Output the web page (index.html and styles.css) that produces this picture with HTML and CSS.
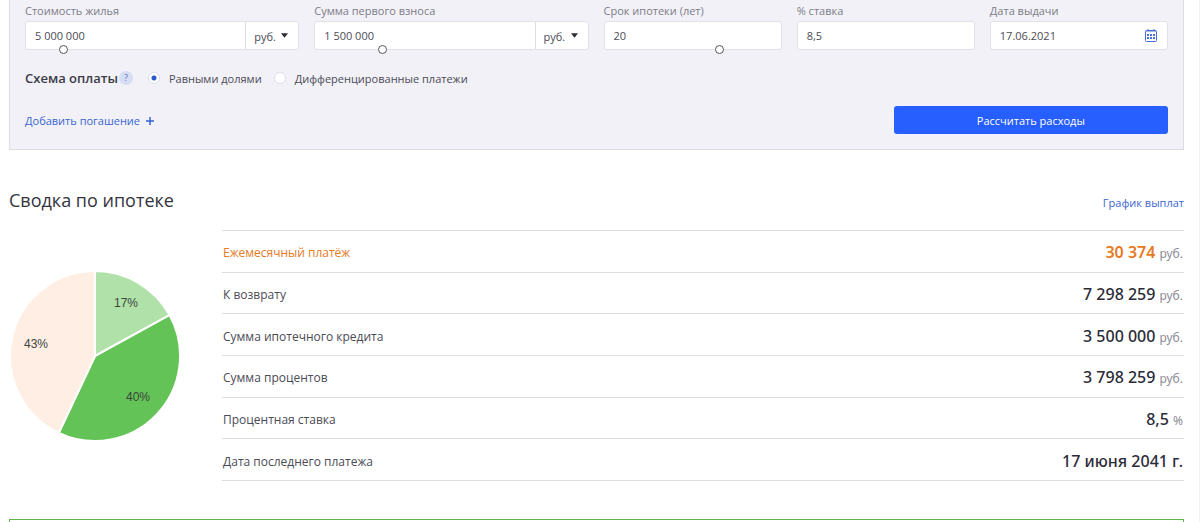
FILE: index.html
```html
<!DOCTYPE html>
<html lang="ru">
<head>
<meta charset="utf-8">
<title>Ипотечный калькулятор</title>
<link rel="stylesheet" href="styles.css">
</head>
<body>
<main class="page">
  <form class="calc">
    <div class="fields">
      <div class="field">
        <label class="field-label" for="price">Стоимость жилья</label>
        <div class="control">
          <input class="input" id="price" type="text" value="5 000 000">
          <div class="currency">
            <select class="currency-select" aria-label="Валюта стоимости"><option>руб.</option></select>
            <svg class="caret" viewBox="0 0 8 5" aria-hidden="true"><path d="M0 0h8L4 5z"/></svg>
          </div>
          <input class="slider" type="range" min="0" max="200" value="25" aria-label="Стоимость жилья">
        </div>
      </div>
      <div class="field">
        <label class="field-label" for="deposit">Сумма первого взноса</label>
        <div class="control">
          <input class="input" id="deposit" type="text" value="1 500 000">
          <div class="currency">
            <select class="currency-select" aria-label="Валюта взноса"><option>руб.</option></select>
            <svg class="caret" viewBox="0 0 8 5" aria-hidden="true"><path d="M0 0h8L4 5z"/></svg>
          </div>
          <input class="slider" type="range" min="0" max="200" value="48" aria-label="Сумма первого взноса">
        </div>
      </div>
      <div class="field">
        <label class="field-label" for="term">Срок ипотеки (лет)</label>
        <div class="control">
          <input class="input" id="term" type="text" value="20">
          <input class="slider" type="range" min="0" max="200" value="132" aria-label="Срок ипотеки">
        </div>
      </div>
      <div class="field">
        <label class="field-label" for="rate">% ставка</label>
        <div class="control"><input class="input" id="rate" type="text" value="8,5"></div>
      </div>
      <div class="field">
        <label class="field-label" for="date">Дата выдачи</label>
        <div class="control">
          <input class="input" id="date" type="text" value="17.06.2021">
          <button class="calendar" type="button" aria-label="Открыть календарь">
            <svg viewBox="0 0 12 13" width="12" height="13" aria-hidden="true">
              <path d="M.5 2.5a1 1 0 0 1 1-1h9a1 1 0 0 1 1 1v9a1 1 0 0 1-1 1h-9a1 1 0 0 1-1-1zM1 2h10M3 0v2M9 0v2" fill="none" stroke="#4a70d8"/>
              <path d="M2 5h2v2H2zM5 5h2v2H5zM8 5h2v2H8zM2 8h2v2H2zM5 8h2v2H5zM8 8h2v2H8z" fill="#4a70d8"/>
            </svg>
          </button>
        </div>
      </div>
    </div>
    <div class="scheme" role="radiogroup" aria-labelledby="scheme-title">
      <span class="scheme-title" id="scheme-title">Схема оплаты</span>
      <button class="help" type="button">?</button>
      <label class="choice"><input class="radio" type="radio" name="scheme" checked><span>Равными долями</span></label>
      <label class="choice"><input class="radio" type="radio" name="scheme"><span>Дифференцированные платежи</span></label>
    </div>
    <div class="actions">
      <a class="link add" href="#">Добавить погашение
        <svg viewBox="0 0 8 8" width="8" height="8" aria-hidden="true"><path d="M4 0v8M0 4h8" stroke="#2f5fd0" stroke-width="1.4"/></svg>
      </a>
      <button class="submit" type="submit">Рассчитать расходы</button>
    </div>
  </form>

  <section class="summary">
    <header class="summary-head">
      <h2 class="summary-title">Сводка по ипотеке</h2>
      <a class="link" href="#">График выплат</a>
    </header>
    <div class="summary-body">
      <svg class="pie" viewBox="0 0 172 172" role="img" aria-label="Структура выплат">
        <g stroke="#fff" stroke-width="2" stroke-linejoin="round">
          <path d="M86 86V1A85 85 0 0 1 160.500 45.050Z" fill="#b0e1a9"/>
          <path d="M86 86L160.500 45.050A85 85 0 0 1 49.800 162.900Z" fill="#63c356"/>
          <path d="M86 86L49.800 162.900A85 85 0 0 1 86 1Z" fill="#feeee4"/>
        </g>
        <g class="pie-text">
          <text x="117" y="37">17%</text>
          <text x="129" y="131">40%</text>
          <text x="27" y="78">43%</text>
        </g>
      </svg>
      <table class="totals">
        <tr class="accent"><th scope="row">Ежемесячный платёж</th><td>30 374 <span class="unit">руб.</span></td></tr>
        <tr><th scope="row">К возврату</th><td>7 298 259 <span class="unit">руб.</span></td></tr>
        <tr><th scope="row">Сумма ипотечного кредита</th><td>3 500 000 <span class="unit">руб.</span></td></tr>
        <tr><th scope="row">Сумма процентов</th><td>3 798 259 <span class="unit">руб.</span></td></tr>
        <tr><th scope="row">Процентная ставка</th><td>8,5 <span class="unit">%</span></td></tr>
        <tr><th scope="row">Дата последнего платежа</th><td>17 июня 2041 г.</td></tr>
      </table>
    </div>
  </section>

  <section class="next"></section>
</main>
</body>
</html>
```

FILE: styles.css
```css
* { box-sizing: border-box; }

body {
  margin: 0;
  background: #fff;
  color: #4b4b55;
  font: 11px/16px "Open Sans", "Noto Sans", sans-serif;
}

input, select, button { font: inherit; color: inherit; }

.page {
  display: flex;
  flex-direction: column;
  min-height: 100vh;
  padding: 0 15px 0 9px;
  border-right: 1px solid #f3f3f5;
}

.calc {
  padding: 3px 15px 15px;
  background: #f2f1f8;
  border: 1px solid #dcdce4;
  border-top: 0;
}

.fields {
  display: grid;
  grid-template-columns: 274fr 274fr 178fr 178fr 178fr;
  gap: 15px;
}

.field { min-width: 0; }

.field-label { display: block; margin-bottom: 2px; color: #7c7c87; }

.control {
  position: relative;
  display: flex;
  height: 29px;
  background: #fff;
  border: 1px solid #e1e1ea;
  border-radius: 3px;
}

.input {
  flex: 1;
  min-width: 0;
  padding: 0 9px;
  border: 0;
  outline: 0;
  background: transparent;
  color: #4b4b55;
}

.currency {
  display: flex;
  align-items: center;
  width: 53px;
  padding: 2px 10px 0 8px;
  border-left: 1px solid #dcdce2;
}

.currency-select {
  flex: 1;
  min-width: 0;
  padding: 0;
  border: 0;
  background: transparent;
  appearance: none;
}

.caret { width: 7px; height: 5px; fill: #2b2b33; margin-bottom: 2px; }

.slider {
  position: absolute;
  left: 0;
  bottom: -5px;
  width: 100%;
  height: 9px;
  margin: 0;
  background: transparent;
  appearance: none;
  pointer-events: none;
}

.slider::-webkit-slider-thumb {
  width: 9px;
  height: 9px;
  border: 1px solid #55555e;
  border-radius: 50%;
  background: #fff;
  appearance: none;
  pointer-events: auto;
}

.calendar {
  display: flex;
  align-items: center;
  padding: 0 10px;
  border: 0;
  background: transparent;
}

.scheme {
  display: flex;
  align-items: center;
  height: 20px;
  margin-top: 18px;
}

.scheme-title { font-size: 13px; font-weight: 600; color: #3b3b45; }

.help {
  width: 14px;
  height: 14px;
  margin: 0 15px 0 1px;
  padding: 0;
  border: 0;
  border-radius: 50%;
  background: #d7def4;
  color: #5b72b8;
  font-size: 9px;
  line-height: 14px;
}

.choice { display: flex; align-items: center; gap: 9px; margin-right: 12px; }
.choice span { padding-top: 2px; }

.radio {
  width: 12px;
  height: 12px;
  margin: 0;
  border: 1px solid #dedee6;
  border-radius: 50%;
  background: #fff;
  appearance: none;
}

.radio:checked { background: radial-gradient(circle, #2a56d0 2px, #fff 3px); }

.actions {
  display: flex;
  align-items: center;
  justify-content: space-between;
  margin-top: 18px;
}

.link { color: #3a66cf; text-decoration: none; }
.add { padding-top: 2px; }
.add svg { margin-left: 3px; }

.submit {
  width: 24%;
  height: 28px;
  padding: 2px 0 0;
  border: 0;
  border-radius: 3px;
  background: #275efe;
  color: #fff;
}

.summary-head {
  display: flex;
  align-items: center;
  justify-content: space-between;
  height: 30px;
  margin-top: 35px;
}

.summary-head .link { padding-top: 6px; }

.summary-title {
  margin: 0;
  color: #343440;
  font-size: 18px;
  font-weight: 400;
  line-height: 30px;
}

.summary-body {
  display: flex;
  align-items: center;
  gap: 41px;
  margin-top: 15px;
}

.pie { flex: none; width: 172px; height: 172px; }

.pie-text {
  fill: #3d463d;
  font: 12px "Liberation Sans", sans-serif;
  text-anchor: middle;
}

.totals {
  flex: 1;
  height: 251px;
  border-collapse: collapse;
  font-size: 12px;
}

.totals tr { border-top: 1px solid #dcdddf; border-bottom: 1px solid #dcdddf; }

.totals th { padding: 4px 1px 0; text-align: left; font-weight: 400; }

.totals td {
  padding: 2px 1px 0;
  color: #2c2c38;
  font-family: "Noto Sans", "Open Sans", sans-serif;
  font-size: 16px;
  font-weight: 500;
  line-height: 20px;
  text-align: right;
}

.totals .accent th, .totals .accent td { color: #e67a1e; }
.totals .accent td { font-weight: 600; }
.totals .unit { color: #8c8c96; font-size: 12px; font-weight: 400; line-height: 12px; }

.next {
  flex: 1;
  margin-top: 38px;
  border: 1px solid #62b34a;
  border-bottom: 0;
}
```
